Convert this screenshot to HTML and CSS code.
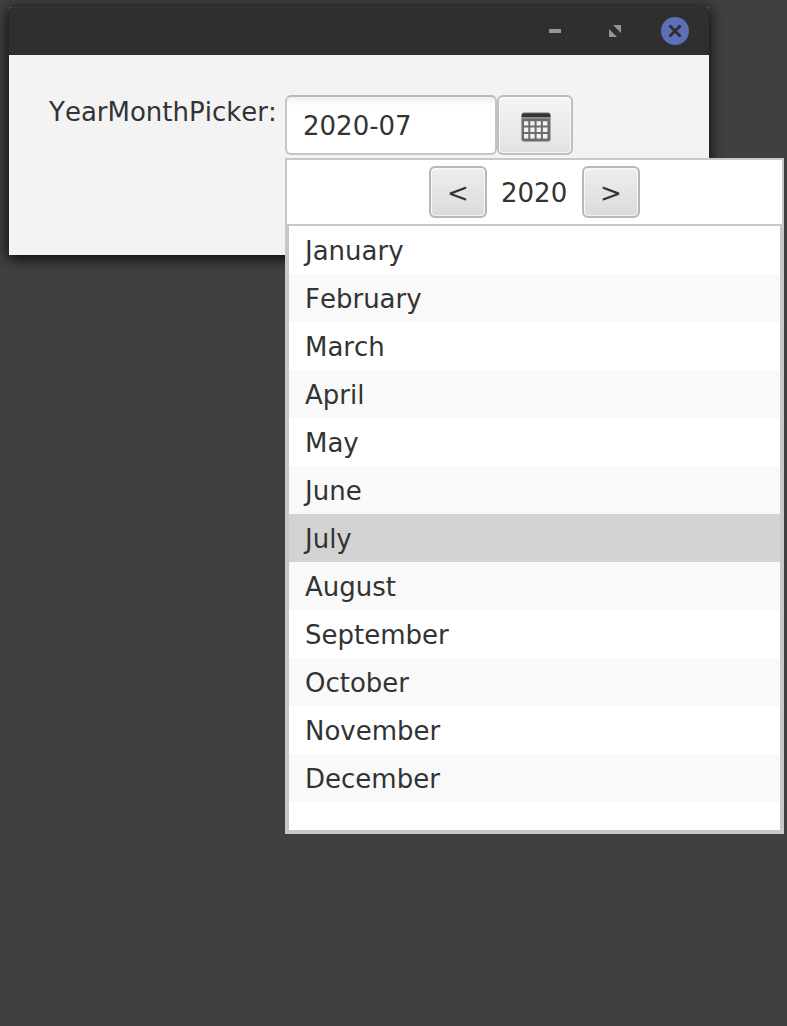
FILE: index.html
```html
<!DOCTYPE html>
<html lang="en">
<head>
<meta charset="utf-8">
<title>YearMonthPicker</title>
<link rel="stylesheet" href="styles.css">
</head>
<body>
<main class="window">
  <header class="titlebar">
    <svg class="control" width="28" height="28" viewBox="0 0 28 28"><path d="M8 12h12v4H8z" fill="#969696"/></svg>
    <svg class="control" width="28" height="28" viewBox="0 0 28 28"><path d="M12 8h8v8zM8 12v8h8z" fill="#969696"/></svg>
    <svg class="control" width="28" height="28" viewBox="0 0 28 28"><circle cx="14" cy="14" r="14" fill="#5c6fb7"/><path d="M9.500 9.500l9 9M18.500 9.500l-9 9" stroke="#2f2f2f" stroke-width="2.900" stroke-linecap="square"/></svg>
  </header>
  <section class="content">
    <label class="label" for="month">YearMonthPicker:</label>
    <div class="picker">
      <input class="field" id="month" value="2020-07">
      <button class="open" aria-label="Choose month">
        <svg width="30" height="30" viewBox="0 0 30 30">
          <path d="M3 0.500h24q2.500 0 2.500 2.500v24q0 2.500-2.500 2.500h-24q-2.500 0-2.500-2.500v-24q0-2.500 2.500-2.500z" fill="#6c6c6c"/>
          <path d="M3 1.500h24q2 0 2.500 3.500h-29q0.500-3.500 2.500-3.500z" fill="#343434"/>
          <path d="M0.500 5.300h29v1.200h-29z" fill="#a0a0a0"/>
          <path d="M3 9.300h4.300v4.300H3zM9.300 9.300h4.300v4.300H9.300zM15.600 9.300h4.300v4.300h-4.300zM21.900 9.300h4.500v4.300h-4.500zM3 15.600h4.300v4.300H3zM9.300 15.600h4.300v4.300H9.300zM15.600 15.600h4.300v4.300h-4.300zM21.900 15.600h4.500v4.300h-4.500zM3 21.900h4.300v4.600H3zM9.300 21.900h4.300v4.600H9.300zM15.600 21.900h4.300v4.600h-4.300zM21.900 21.900h4.500v4.600h-4.500z" fill="#f2f2f2"/>
        </svg>
      </button>
      <div class="popup">
        <div class="year-bar">
          <button class="step">&lt;</button>
          <span class="year">2020</span>
          <button class="step">&gt;</button>
        </div>
        <ul class="months">
          <li class="month">January</li>
          <li class="month">February</li>
          <li class="month">March</li>
          <li class="month">April</li>
          <li class="month">May</li>
          <li class="month">June</li>
          <li class="month selected">July</li>
          <li class="month">August</li>
          <li class="month">September</li>
          <li class="month">October</li>
          <li class="month">November</li>
          <li class="month">December</li>
        </ul>
      </div>
    </div>
  </section>
</main>
</body>
</html>
```
FILE: styles.css
```css
* { box-sizing: border-box; }
body {
  margin: 0;
  height: 1026px;
  padding: 7px 0 0 9px;
  overflow: hidden;
  background: #404040;
  color: #333;
  font: 26px/48px "DejaVu Sans", sans-serif;
  font-kerning: none;
}
button, input { font: inherit; font-kerning: none; color: inherit; margin: 0; }
.window {
  width: 700px;
  height: 248px;
  background: #f3f3f3;
  border-radius: 3px 3px 0 0;
  box-shadow: 0 3px 14px 1px rgba(0, 0, 0, .85);
}
.titlebar {
  height: 48px;
  padding: 0 20px 1px;
  display: flex;
  align-items: center;
  justify-content: flex-end;
  gap: 32px;
  background: #2f2f2f;
  border-top: 1px solid #383333;
  border-radius: 3px 3px 0 0;
}
.control { display: block; }
.content {
  display: flex;
  align-items: flex-start;
  padding: 40px;
}
.label { width: 236px; line-height: 35px; white-space: nowrap; }
.picker { position: relative; display: flex; }
.field {
  width: 212px;
  height: 60px;
  padding: 2px 16px 0;
  border: 2px solid #c4c4c4;
  border-top-color: #b9b9b9;
  border-radius: 6px;
  background: linear-gradient(#f0f0f0, #fff 9px);
  outline: none;
}
.open, .step {
  display: flex;
  align-items: center;
  justify-content: center;
  padding: 2px 0 0;
  border: 2px solid #b7b7b7;
  border-radius: 6px;
  background: linear-gradient(#eee, #dbdbdb);
  box-shadow: inset 0 1px 0 1px #f7f7f7, inset 0 0 0 1px #f1f1f1;
}
.open {
  width: 76px;
  height: 60px;
  padding-top: 3px;
  padding-left: 2px;
  border-color: #bebebe;
  background: linear-gradient(#f5f5f5, #e2e2e2);
  box-shadow: inset 0 1px 0 1px #fafafa, inset 0 0 0 1px #f4f4f4;
}
.popup {
  position: absolute;
  z-index: 1;
  top: 63px;
  left: 0;
  width: 499px;
  height: 676px;
  border: 2px solid #c8c8c8;
  background: #fff;
}
.year-bar {
  height: 64px;
  display: flex;
  align-items: center;
  justify-content: center;
  gap: 14px;
}
.year { width: 67px; padding-top: 2px; white-space: nowrap; }
.step { width: 58px; height: 52px; }
.months {
  height: 608px;
  margin: 0;
  padding: 0;
  list-style: none;
  border: 2px solid #c8c8c8;
}
.month { height: 48px; padding: 1px 16px 0; }
.month:nth-child(even) { background: #f9f9f9; }
.month.selected { background: #d3d3d3; }
```
